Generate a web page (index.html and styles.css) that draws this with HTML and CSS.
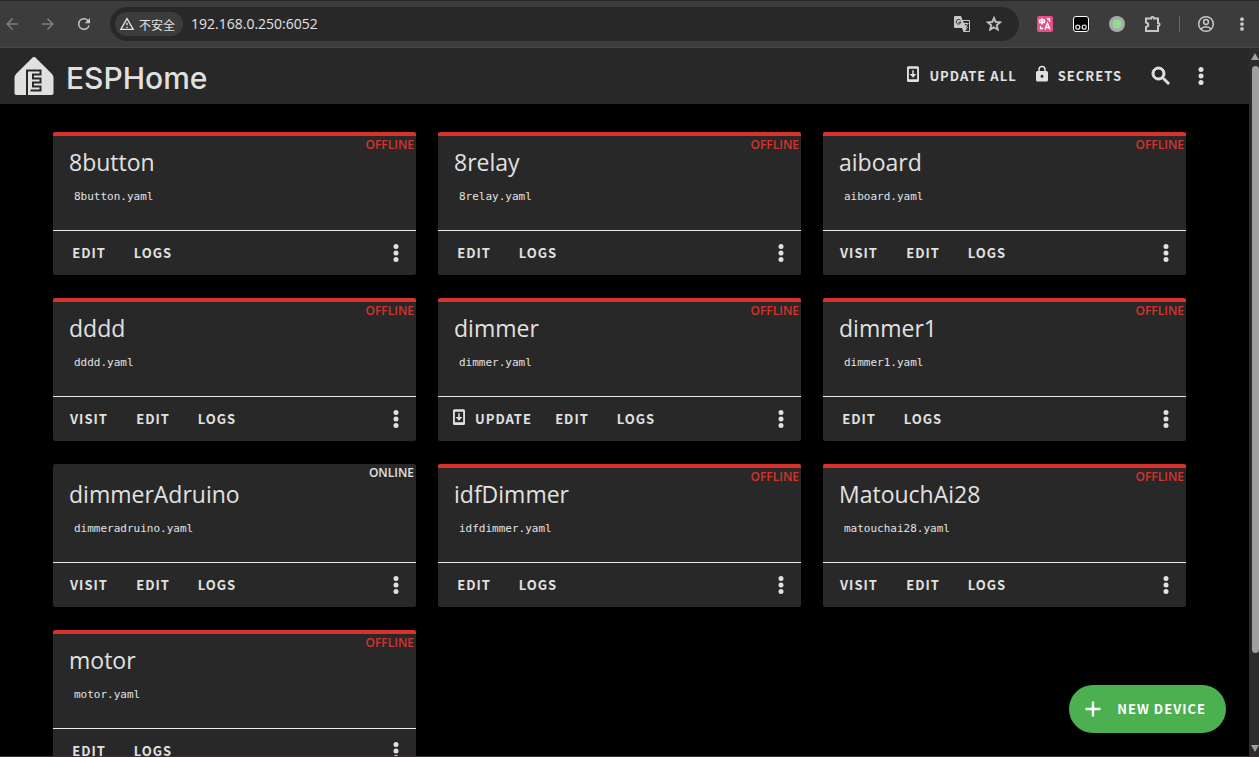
FILE: index.html
```html
<!DOCTYPE html>
<html lang="en">

<head>
    <meta charset="UTF-8">
    <meta name="viewport" content="width=device-width, initial-scale=1.0">
    <title>ESPHome</title>
    <link rel="stylesheet" href="styles.css">
</head>

<body>
    <!-- shared icons -->
    <svg class="sprite" aria-hidden="true">
        <symbol id="dots" viewBox="0 0 24 24">
            <circle cx="12" cy="5.500" r="2.500" /><circle cx="12" cy="12" r="2.500" /><circle cx="12" cy="18.500" r="2.500" />
        </symbol>
        <symbol id="update" viewBox="0 0 24 24">
            <path fill-rule="evenodd" d="M6 1.500h12a2 2 0 0 1 2 2v17a2 2 0 0 1-2 2H6a2 2 0 0 1-2-2v-17a2 2 0 0 1 2-2zM6.500 5v14h11V5z" />
            <path d="M16.500 12H13V7h-2v5H7.500l4.500 5z" />
        </symbol>
    </svg>

    <div class="browser-bar">
        <button class="nav-btn dim" aria-label="Back"><svg viewBox="0 0 24 24"><path d="M20 11v2H8l5.500 5.500-1.420 1.420L4.160 12l7.920-7.920L13.500 5.500 8 11z" /></svg></button>
        <button class="nav-btn dim" aria-label="Forward"><svg viewBox="0 0 24 24"><path d="M4 11v2h12l-5.500 5.500 1.420 1.420L19.840 12l-7.920-7.920L10.500 5.500 16 11z" /></svg></button>
        <button class="nav-btn" aria-label="Reload"><svg viewBox="0 0 24 24"><path d="M17.650 6.350A8 8 0 1 0 19.730 14h-2.080A6 6 0 1 1 12 6c1.660 0 3.140.690 4.220 1.780L13 11h7V4z" /></svg></button>
        <div class="address">
            <button class="unsafe"><svg viewBox="0 0 24 24"><path d="M12 2 1 21h22M12 6l7.530 13H4.470M11 10v4h2v-4m-2 6v2h2v-2" /></svg>不安全</button>
            <input class="url" type="text" value="192.168.0.250:6052" aria-label="Address">
            <button class="addr-btn" aria-label="Translate">
                <svg viewBox="0 0 18 18"><path d="M2 1h6l1.500 4H16a1 1 0 0 1 1 1v10a1 1 0 0 1-1 1h-5.500L9 13H2a1 1 0 0 1-1-1V2a1 1 0 0 1 1-1z" /><path class="hole" d="M10 6h6v10h-4l2-2-4-8z" /><path class="line-dark" d="M7.500 5.500A2.300 2.300 0 1 0 7.800 7.300H5.500" /><path class="line" d="M10.500 8.500h5M13 7.500v1M14.500 8.500c-.5 2-1.500 3-3 4M11.800 9.500l3 3.500" /></svg>
            </button>
            <button class="addr-btn star" aria-label="Bookmark"><svg viewBox="0 0 24 24"><path d="m12 15.390-3.760 2.270.990-4.280-3.320-2.880 4.380-.370L12 6.090l1.710 4.040 4.380.370-3.320 2.880.990 4.280M22 9.240l-7.190-.610L12 2 9.190 8.630 2 9.240l5.450 4.730L5.820 21 12 17.270 18.180 21l-1.640-7.030z" /></svg></button>
        </div>
        <button class="ext" aria-label="Translate extension">
            <svg viewBox="0 0 16 16"><rect width="16" height="16" rx="2" fill="#e64f87" /><path d="M2.500 4h5v2.500h-5zM5 2v6.500M10 3h2.500v3M3.500 10v2.500H6M8 13.500 10.500 7l2.500 6.500M9 11.500h3" fill="none" stroke="#fff" stroke-width="1.300" /></svg>
        </button>
        <button class="ext" aria-label="Tampermonkey">
            <svg viewBox="0 0 16 16"><rect x=".5" y=".5" width="15" height="15" rx="2.500" fill="#000" stroke="#fff" /><circle cx="4.800" cy="11.200" r="2" fill="none" stroke="#ddd" stroke-width="1.300" /><circle cx="11.200" cy="11.200" r="2" fill="none" stroke="#ddd" stroke-width="1.300" /></svg>
        </button>
        <button class="ext" aria-label="Status extension">
            <svg viewBox="0 0 16 16"><circle cx="8" cy="8" r="8" fill="#a9a9a9" /><circle cx="8" cy="8" r="4.500" fill="#8fdc97" /></svg>
        </button>
        <button class="ext puzzle" aria-label="Extensions">
            <svg viewBox="0 0 18 18"><path d="M2 3.500h5a1.500 1.500 0 0 1 3 0h4v4.500a1.500 1.500 0 0 1 0 3V16H2v-4c3-.5 3-4 0-4.500z" /></svg>
        </button>
        <span class="divider"></span>
        <button class="ext profile" aria-label="Profile">
            <svg viewBox="0 0 18 18"><circle cx="9" cy="9" r="7.300" /><circle cx="9" cy="7" r="2.400" /><path d="M4 14c2-3 8-3 10 0" /></svg>
        </button>
        <button class="ext menu" aria-label="Browser menu"><svg viewBox="0 0 24 24"><use href="#dots" /></svg></button>
    </div>

    <div class="viewport">
        <div class="page">
            <header>
                <a class="logo" href="#">
                    <svg viewBox="0 0 40 38"><path d="M18.300.700a2.500 2.500 0 0 1 3.400 0L38 17q1.500 1.500 1.500 3.500V36a2 2 0 0 1-2 2h-35a2 2 0 0 1-2-2V20.500Q.5 18.500 2 17z" /><path class="trace" d="M13 38V13.500H26.500v4h-7.500v4h7.500v4h-7.500v4h7.500v4h-10" /></svg>
                    <span>ESPHome</span>
                </a>
                <nav>
                    <button class="btn"><svg viewBox="0 0 24 24"><use href="#update" /></svg>Update all</button>
                    <button class="btn"><svg viewBox="0 0 24 24"><path d="M12 17a2 2 0 0 0 2-2c0-1.110-.9-2-2-2a2 2 0 0 0-2 2 2 2 0 0 0 2 2m6-9a2 2 0 0 1 2 2v10a2 2 0 0 1-2 2H6a2 2 0 0 1-2-2V10c0-1.110.9-2 2-2h1V6a5 5 0 0 1 10 0v2h1m-6-5a3 3 0 0 0-3 3v2h6V6a3 3 0 0 0-3-3z" /></svg>Secrets</button>
                    <button class="icon-btn search" aria-label="Search"><svg viewBox="0 0 24 24"><path d="M9.500 3A6.500 6.500 0 0 1 16 9.500c0 1.610-.590 3.090-1.560 4.230l.270.270h.790l5 5-1.500 1.500-5-5v-.790l-.270-.270A6.500 6.500 0 1 1 9.500 3m0 2a4.500 4.500 0 1 0 0 9 4.500 4.500 0 0 0 0-9z" /></svg></button>
                    <button class="icon-btn" aria-label="Menu"><svg viewBox="0 0 24 24"><use href="#dots" /></svg></button>
                </nav>
            </header>

            <main id="devices"></main>
        </div>
        <div class="scrollbar"><span class="arrow up"></span><span class="thumb"></span><span class="arrow down"></span></div>
        <button class="new-device"><svg viewBox="0 0 24 24"><path d="M19.500 13.200h-6.300v6.300h-2.400v-6.300H4.500v-2.400h6.300V4.500h2.400v6.300h6.300z" /></svg>New device</button>
    </div>

    <script src="script.js"></script>
</body>

</html>
```
FILE: styles.css
```css
* {
    box-sizing: border-box;
}

body {
    margin: 0;
    height: 100vh;
    display: flex;
    flex-direction: column;
    overflow: hidden;
    background: #000;
    color: #e1e1e1;
    font-family: "Open Sans", "Noto Sans CJK SC", sans-serif;
}

button {
    display: flex;
    align-items: center;
    justify-content: center;
    padding: 0;
    border: 0;
    background: none;
    color: inherit;
    cursor: pointer;
}

svg {
    fill: currentColor;
    flex: none;
}

.sprite {
    display: none;
}

/* browser toolbar */
.browser-bar {
    flex: none;
    height: 48px;
    display: flex;
    align-items: center;
    padding: 0 9px 0 4px;
    background: #3c3c3c;
    border-top: 1px solid #282828;
    border-bottom: 1px solid #484848;
    color: #c7c7c7;
}

.nav-btn {
    width: 16px;
    height: 32px;
    margin-right: 20px;
}

.nav-btn svg {
    width: 18px;
    height: 18px;
}

.nav-btn.dim {
    color: #7e7e7e;
}

.address {
    flex: 1;
    height: 34px;
    display: flex;
    align-items: center;
    margin: 0 18px 0 -2px;
    padding: 0 16px 0 5px;
    border-radius: 17px;
    background: #282828;
}

.unsafe {
    height: 24px;
    gap: 4px;
    padding: 0 8px 0 4px;
    border-radius: 12px;
    background: #3c3c3c;
    color: #e3e3e3;
    font: 12px "Noto Sans CJK SC", sans-serif;
}

.unsafe svg {
    width: 16px;
    height: 16px;
}

.url {
    flex: 1;
    min-width: 0;
    padding: 0 8px 2px;
    border: 0;
    outline: 0;
    background: none;
    color: #e3e3e3;
    font: 14px "Open Sans", sans-serif;
}

.addr-btn {
    margin-left: 14px;
}

.addr-btn svg {
    width: 18px;
    height: 18px;
}

.addr-btn .hole {
    fill: #282828;
}

.addr-btn .line,
.addr-btn .line-dark {
    fill: none;
    stroke: #c7c7c7;
}

.addr-btn .line-dark {
    stroke: #282828;
}

.star svg {
    stroke: currentColor;
    stroke-width: 1;
}

.ext {
    width: 16px;
    margin-right: 20px;
}

.browser-bar > .ext svg {
    width: 16px;
    height: 16px;
}

.browser-bar > .puzzle svg,
.browser-bar > .profile svg,
.browser-bar > .menu svg {
    width: 18px;
    height: 18px;
}

.browser-bar > .puzzle svg,
.browser-bar > .profile svg {
    fill: none;
    stroke: #c7c7c7;
    stroke-width: 2;
}

.browser-bar > .profile svg {
    stroke-width: 1.5;
}

.puzzle {
    margin-right: 18px;
}

.divider {
    width: 1px;
    height: 16px;
    margin-right: 18px;
    background: #666;
}

.browser-bar > .menu {
    margin-right: 0;
}

/* dashboard */
.viewport {
    flex: 1;
    min-height: 0;
    display: flex;
    position: relative;
    border-bottom: 1px solid #3a2f38;
}

.page {
    flex: 1;
    overflow: hidden;
}

header {
    height: 56px;
    display: flex;
    align-items: center;
    justify-content: space-between;
    padding: 0 28px 0 14px;
    background: #282828;
}

.logo {
    display: flex;
    align-items: center;
    gap: 12px;
    color: #e1e0de;
    font: 500 30px/32px Inter, sans-serif;
    text-decoration: none;
}

.logo span {
    padding-top: 3px;
}

.logo svg {
    width: 40px;
    height: 38px;
}

.logo .trace {
    fill: none;
    stroke: #282828;
    stroke-width: 2;
}

nav {
    display: flex;
    align-items: center;
}

.btn,
.new-device {
    font: bold 13px/20px "Noto Sans CJK SC", sans-serif;
    letter-spacing: 1px;
    text-transform: uppercase;
}

.btn {
    min-width: 64px;
    height: 36px;
    padding: 0 8px;
}

.btn svg {
    width: 18px;
    height: 18px;
    margin: -4px 7px 0 0;
}

.icon-btn {
    width: 40px;
    height: 40px;
}

.icon-btn svg {
    width: 24px;
    height: 24px;
}

.search {
    margin-left: 11px;
}

.search svg {
    stroke: currentColor;
    stroke-width: 1;
}

main {
    display: grid;
    grid-template-columns: repeat(3, 1fr);
    gap: 23px 22px;
    padding: 28px 63px 28px 53px;
}

.card {
    position: relative;
    height: 143px;
    display: flex;
    flex-direction: column;
    border-radius: 2px;
    background: #282828;
    overflow: hidden;
}

.card.offline {
    border-top: 4px solid #d7322b;
}

.status {
    position: absolute;
    top: 0;
    right: 2px;
    font: 600 12px/17px "Open Sans", sans-serif;
    text-transform: uppercase;
}

.offline .status {
    color: #d7322b;
}

.card-body {
    flex: 1;
    padding: 12px 16px 0;
}

.offline .card-body {
    padding-top: 8px;
}

.card h2 {
    margin: 0;
    font-size: 23px;
    font-weight: 400;
    line-height: 36px;
}

.filename {
    margin: 9px 5px 0;
    font: 11px/16px "DejaVu Sans Mono", monospace;
}

.actions {
    height: 45px;
    display: flex;
    align-items: center;
    padding: 0 8px 0 4px;
    border-top: 1px solid #e8e8e8;
}

.actions .icon-btn {
    width: 24px;
    margin-left: auto;
}

.new-device {
    position: absolute;
    right: 33px;
    bottom: 23px;
    height: 48px;
    gap: 12px;
    padding: 0 20px 0 12px;
    border-radius: 24px;
    background: #4caf50;
    color: #fff;
}

.new-device svg {
    width: 24px;
    height: 24px;
}

.scrollbar {
    width: 10px;
    display: flex;
    flex-direction: column;
    align-items: flex-end;
    gap: 6px;
    padding: 5px 0 4px;
    background: #2c2c2c;
    overflow: hidden;
}

.thumb {
    width: 7px;
    flex: 0 1 84%;
    border-radius: 4px;
    background: #9f9f9f;
}

.arrow {
    border: 4px solid transparent;
    border-top: 0;
    border-bottom: 7px solid #9f9f9f;
}

.arrow.down {
    margin-top: auto;
    border-top: 7px solid #9f9f9f;
    border-bottom: 0;
}
```
FILE: script.js
```js
const devices = [
    { name: "8button" },
    { name: "8relay" },
    { name: "aiboard", visit: true },
    { name: "dddd", visit: true },
    { name: "dimmer", update: true },
    { name: "dimmer1" },
    { name: "dimmerAdruino", visit: true, online: true },
    { name: "idfDimmer" },
    { name: "MatouchAi28", visit: true },
    { name: "motor" },
];

function card(device) {
    const status = device.online ? "online" : "offline";
    let first = "";
    if (device.visit) first = '<button class="btn">Visit</button>';
    if (device.update) first = '<button class="btn"><svg viewBox="0 0 24 24"><use href="#update" /></svg>Update</button>';

    return `<section class="card ${status}">
        <span class="status">${status}</span>
        <div class="card-body">
            <h2>${device.name}</h2>
            <div class="filename">${device.name.toLowerCase()}.yaml</div>
        </div>
        <div class="actions">
            ${first}
            <button class="btn">Edit</button>
            <button class="btn">Logs</button>
            <button class="icon-btn" aria-label="More"><svg viewBox="0 0 24 24"><use href="#dots" /></svg></button>
        </div>
    </section>`;
}

document.getElementById("devices").innerHTML = devices.map(card).join("");
```
